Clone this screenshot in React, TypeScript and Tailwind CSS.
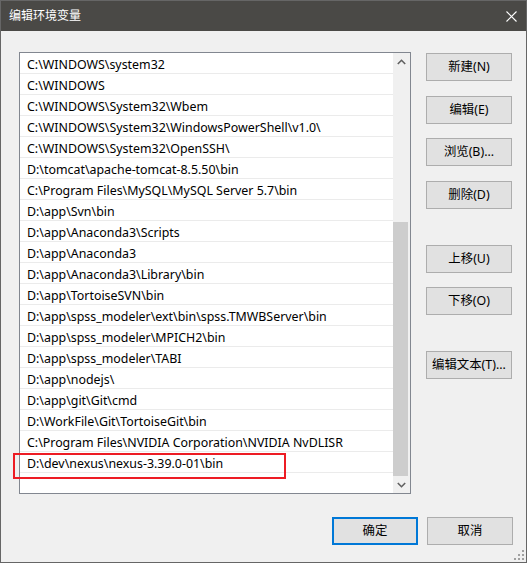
import React from "react";

const paths = [
  "C:\\WINDOWS\\system32",
  "C:\\WINDOWS",
  "C:\\WINDOWS\\System32\\Wbem",
  "C:\\WINDOWS\\System32\\WindowsPowerShell\\v1.0\\",
  "C:\\WINDOWS\\System32\\OpenSSH\\",
  "D:\\tomcat\\apache-tomcat-8.5.50\\bin",
  "C:\\Program Files\\MySQL\\MySQL Server 5.7\\bin",
  "D:\\app\\Svn\\bin",
  "D:\\app\\Anaconda3\\Scripts",
  "D:\\app\\Anaconda3",
  "D:\\app\\Anaconda3\\Library\\bin",
  "D:\\app\\TortoiseSVN\\bin",
  "D:\\app\\spss_modeler\\ext\\bin\\spss.TMWBServer\\bin",
  "D:\\app\\spss_modeler\\MPICH2\\bin",
  "D:\\app\\spss_modeler\\TABI",
  "D:\\app\\nodejs\\",
  "D:\\app\\git\\Git\\cmd",
  "D:\\WorkFile\\Git\\TortoiseGit\\bin",
  "C:\\Program Files\\NVIDIA Corporation\\NVIDIA NvDLISR",
  "D:\\dev\\nexus\\nexus-3.39.0-01\\bin",
];

const font = {
  fontFamily: '"Noto Sans", "Noto Sans CJK SC", sans-serif',
};

function Btn({ label, primary }: { label: string; primary?: boolean }) {
  return (
    <button
      className={
        primary
          ? "w-[86px] h-[28px] bg-[#e1e1e1] border-2 border-[#0078d7] text-[12.4px] text-black leading-none"
          : "w-[86px] h-[28px] bg-[#e1e1e1] border border-[#adadad] text-[12.4px] text-black leading-none"
      }
    >
      {label}
    </button>
  );
}

export default function App() {
  return (
    <div
      className="w-[527px] h-[563px] border border-[#666666] bg-[#f0f0f0] flex flex-col relative select-none"
      style={font}
    >
      {/* title bar */}
      <div className="h-[30px] bg-[#4a4946] flex items-center justify-between pl-[8px] pr-[9px]">
        <span className="text-white text-[12px]">编辑环境变量</span>
        <svg width="11" height="11" viewBox="0 0 11 11">
          <path d="M0.5 0.5 L10.5 10.5 M10.5 0.5 L0.5 10.5" stroke="#ffffff" strokeWidth="1.1" />
        </svg>
      </div>

      {/* body */}
      <div className="flex pl-[18px] pt-[21px]">
        <div className="w-[392px] h-[442px] border border-[#828790] bg-white flex">
          <div className="flex-1 flex flex-col">
            {paths.map((p) => (
              <div
                key={p}
                className="h-[21px] border-b border-[#ebebeb] pl-[7px] pt-[3px] text-[12.4px] leading-[17px] text-black whitespace-nowrap"
              >
                {p}
              </div>
            ))}
          </div>
          {/* vertical scrollbar */}
          <div className="w-[17px] bg-[#f0f0f0] flex flex-col">
            <div className="h-[17px] flex items-center justify-center">
              <svg width="9" height="6" viewBox="0 0 9 6">
                <path d="M0.8 5 L4.5 1.3 L8.2 5" fill="none" stroke="#606060" strokeWidth="1.6" />
              </svg>
            </div>
            <div className="h-[152px]" />
            <div className="w-[15px] flex-1 bg-[#cdcdcd]" />
            <div className="h-[17px] flex items-center justify-center">
              <svg width="9" height="6" viewBox="0 0 9 6">
                <path d="M0.8 1 L4.5 4.7 L8.2 1" fill="none" stroke="#606060" strokeWidth="1.6" />
              </svg>
            </div>
          </div>
        </div>

        <div className="ml-[15px] flex flex-col pt-[1px]">
          <Btn label="新建(N)" />
          <div className="h-[15px]" />
          <Btn label="编辑(E)" />
          <div className="h-[14px]" />
          <Btn label="浏览(B)..." />
          <div className="h-[15px]" />
          <Btn label="删除(D)" />
          <div className="h-[36px]" />
          <Btn label="上移(U)" />
          <div className="h-[14px]" />
          <Btn label="下移(O)" />
          <div className="h-[36px]" />
          <Btn label="编辑文本(T)..." />
        </div>
      </div>

      {/* dialog buttons */}
      <div className="flex justify-end gap-[9px] pr-[13px] mt-[23px]">
        <Btn label="确定" primary />
        <Btn label="取消" />
      </div>

      {/* highlight box around the new entry */}
      <div className="absolute left-[12px] top-[452px] w-[273px] h-[26px] border-2 border-[#ed1c24]" />

      {/* resize grip */}
      <svg className="absolute right-[2px] bottom-[2px]" width="10" height="10" viewBox="0 0 10 10">
        <rect x="8" y="0" width="2" height="2" fill="#a0a0a0" />
        <rect x="4" y="4" width="2" height="2" fill="#a0a0a0" />
        <rect x="8" y="4" width="2" height="2" fill="#a0a0a0" />
        <rect x="0" y="8" width="2" height="2" fill="#a0a0a0" />
        <rect x="4" y="8" width="2" height="2" fill="#a0a0a0" />
        <rect x="8" y="8" width="2" height="2" fill="#a0a0a0" />
      </svg>
    </div>
  );
}
